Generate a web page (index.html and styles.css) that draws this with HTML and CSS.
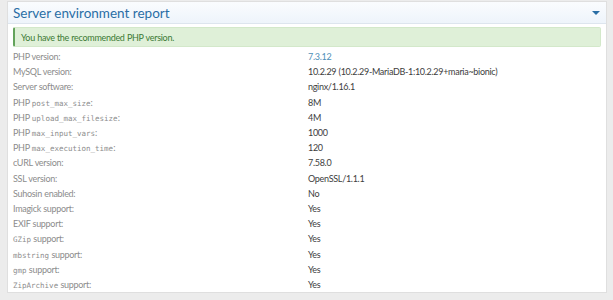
FILE: index.html
```html
<!DOCTYPE html>
<html lang="en">

<head>
    <meta http-equiv="Content-Type" content="text/html; charset=UTF-8">
    <title>Server environment report</title>
    <link rel="stylesheet" href="styles.css">
</head>

<body>
    <section class="block">
        <h2 class="block-header">
            <span class="block-title">Server environment report</span>
            <span class="block-toggle"></span>
        </h2>
        <div class="block-body">
            <div class="alert-success">You have the recommended PHP version.</div>
            <dl class="pairs">
                <dt>PHP version:</dt>
                <dd class="link">7.3.12</dd>
                <dt>MySQL version:</dt>
                <dd>10.2.29 (10.2.29-MariaDB-1:10.2.29+maria~bionic)</dd>
                <dt>Server software:</dt>
                <dd>nginx/1.16.1</dd>
                <dt>PHP <code>post_max_size</code>:</dt>
                <dd>8M</dd>
                <dt>PHP <code>upload_max_filesize</code>:</dt>
                <dd>4M</dd>
                <dt>PHP <code>max_input_vars</code>:</dt>
                <dd>1000</dd>
                <dt>PHP <code>max_execution_time</code>:</dt>
                <dd>120</dd>
                <dt>cURL version:</dt>
                <dd>7.58.0</dd>
                <dt>SSL version:</dt>
                <dd>OpenSSL/1.1.1</dd>
                <dt>Suhosin enabled:</dt>
                <dd>No</dd>
                <dt>Imagick support:</dt>
                <dd>Yes</dd>
                <dt>EXIF support:</dt>
                <dd>Yes</dd>
                <dt><code>GZip</code> support:</dt>
                <dd>Yes</dd>
                <dt><code>mbstring</code> support:</dt>
                <dd>Yes</dd>
                <dt><code>gmp</code> support:</dt>
                <dd>Yes</dd>
                <dt><code>ZipArchive</code> support:</dt>
                <dd>Yes</dd>
            </dl>
        </div>
    </section>
</body>

</html>
```

FILE: styles.css
```css
body {
    margin: 0;
    background-color: #ececec;
    font-family: Lato, "Open Sans", sans-serif;
    font-size: 9px;
    letter-spacing: -0.3px;
    word-spacing: 0.3px;
}

.block {
    margin: 1px 6px 0 7px;
    background-color: #fff;
    border: 1px solid #dfdfdf;
}

.block-header {
    display: flex;
    align-items: center;
    justify-content: space-between;
    margin: 0;
    padding: 3px 6px 3px 5px;
    height: 15px;
    background: linear-gradient(to bottom, #fafcfe, #eef4fb);
    border-bottom: 1px solid #dde5ee;
    font-weight: normal;
    letter-spacing: 0;
    word-spacing: 0;
}

.block-title {
    font-size: 13.5px;
    color: #2a6ea5;
}

.block-toggle {
    width: 0;
    height: 0;
    border-left: 4px solid transparent;
    border-right: 4px solid transparent;
    border-top: 4px solid #2a6ea5;
}

.block-body {
    padding: 3px 5px 0 5px;
}

.alert-success {
    padding: 4px 6px 3px 6px;
    line-height: 11px;
    background-color: #dff0d8;
    border: 1px solid #d3e8ca;
    border-left: 2px solid #63a35b;
    border-radius: 2px;
    color: #3c7a34;
}

.pairs {
    display: grid;
    grid-template-columns: 295px 1fr;
    margin: 2px 0 0 0;
    line-height: 15.2px;
}

.pairs dt {
    color: #8c8c8c;
}

.pairs dd {
    margin: 0;
    color: #3d3d3d;
}

.pairs dd.link {
    color: #4f8fb8;
}

.pairs code {
    font-family: "DejaVu Sans Mono", "Liberation Mono", monospace;
    font-size: 7.5px;
    letter-spacing: 0;
    word-spacing: 0;
    line-height: 1;
}
```
